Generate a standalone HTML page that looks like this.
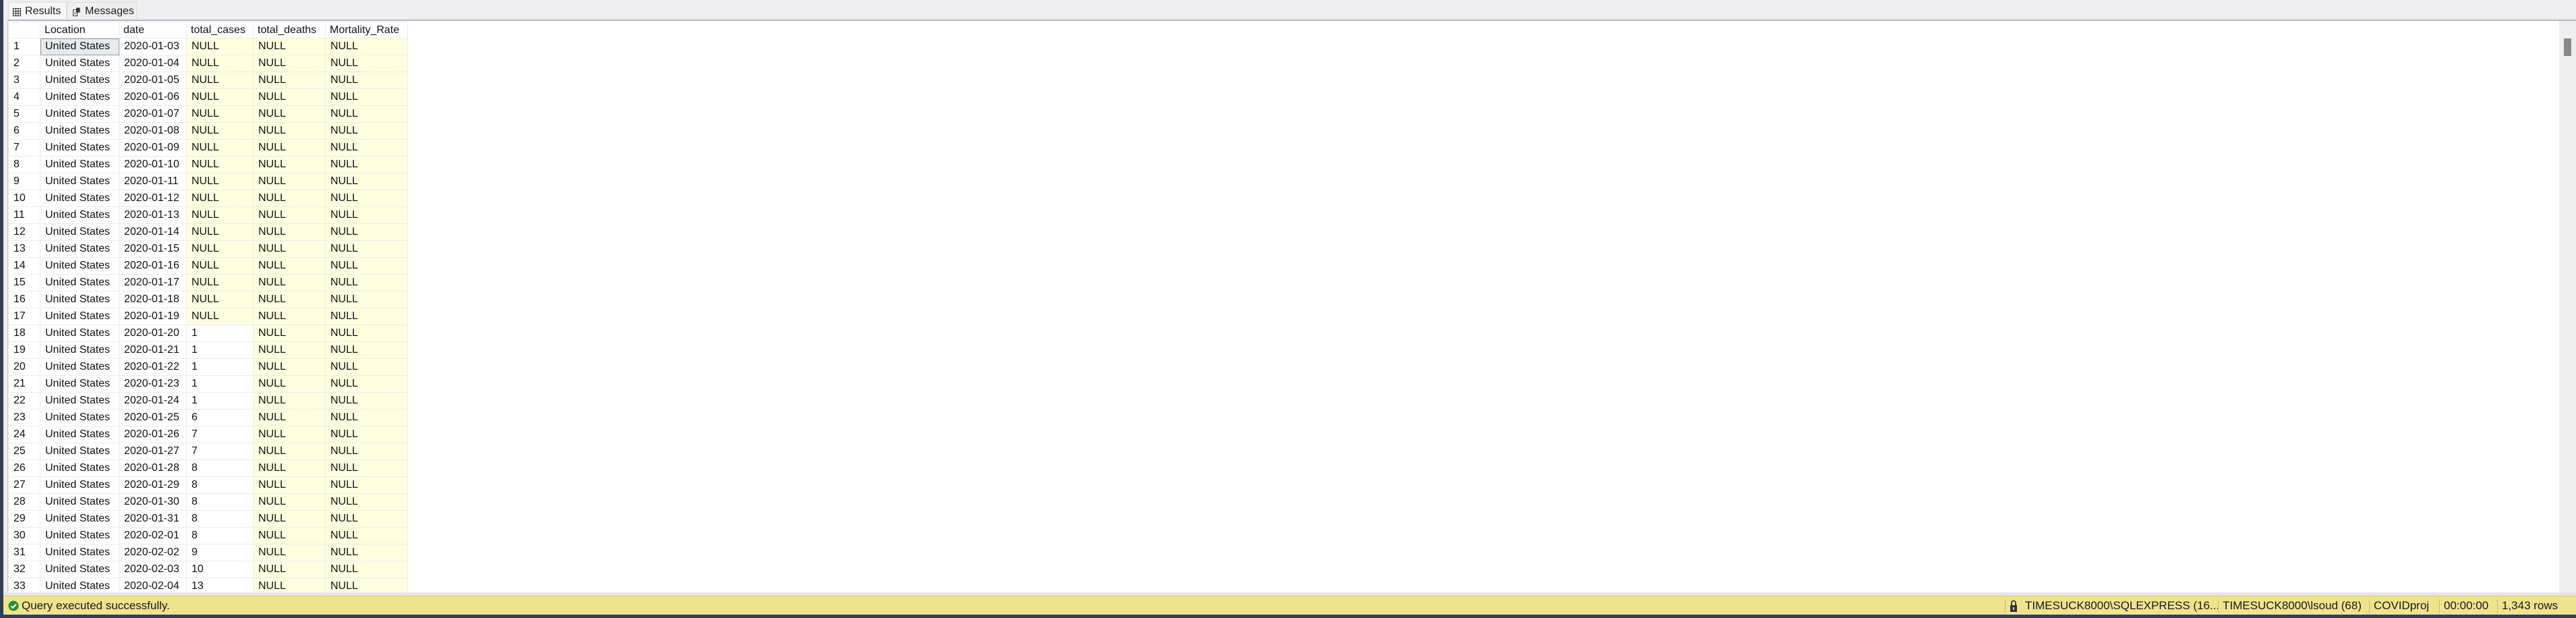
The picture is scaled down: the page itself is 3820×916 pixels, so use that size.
<!DOCTYPE html>
<html><head><meta charset="utf-8"><style>
*{margin:0;padding:0;box-sizing:border-box}
body{width:3820px;height:916px;overflow:hidden;background:#eeeef0;position:relative;font-family:"Liberation Sans",Arial,sans-serif;color:#1e1e1e}
.lb{position:absolute;left:0;top:0;width:5px;height:916px;background:#2f3d5c}
.bb{position:absolute;left:0;top:911px;width:3820px;height:5px;background:#2f3d5c}
.grid{position:absolute;left:11px;top:29px;width:3809px;height:850px;background:#fff;border-top:2px solid #b4b4c4;border-left:1px solid #c8c8d0;overflow:hidden}
.sb{position:absolute;right:0;top:0;width:25px;height:850px;background:#efefef}
.thumb{position:absolute;left:7px;top:26px;width:11px;height:26px;background:#888}
table{position:absolute;left:0;top:1px;border-collapse:collapse;table-layout:fixed;font-size:16px}
td,th{height:25px;padding:0 0 0 7px;text-align:left;font-weight:normal;white-space:nowrap;border:1px solid #ececec;overflow:hidden;color:#111}
th{height:24px;padding-left:6px}
tr td:first-child{padding-left:7px}
.y{background:#ffffe0}
.sel{background:#e6ebf0;outline:1px dotted #444;outline-offset:-1px}
.tab{position:absolute;top:3px;height:27px;font-size:16px;border:1px solid #dcdcdc;border-bottom:none;white-space:nowrap}
.st{position:absolute;left:5px;top:883px;width:3815px;height:28px;background:#efe48c;border-top:1px solid #d0c880}
.gap{position:absolute;left:5px;top:878px;width:3815px;height:5px;background:#e4e4ea}
.t{position:absolute;top:4px;font-size:17px;white-space:nowrap;color:#1a1a1a}
.sep{position:absolute;top:4px;width:1px;height:21px;background:#c8bd70}
</style></head><body>
<div class="tab" style="left:12px;width:87px;background:#f7f7f7">
<svg style="position:absolute;left:6px;top:8px" width="12" height="12"><rect x=".5" y=".5" width="11" height="11" fill="none" stroke="#333"/><path d="M0 4.5h12M0 8h12M4.5 0v12M8 0v12" stroke="#333" stroke-width="1"/></svg>
<span style="position:absolute;left:24px;top:4px">Results</span></div>
<div class="tab" style="left:99px;width:104px;height:25px;background:#efefef">
<svg style="position:absolute;left:7px;top:7px" width="12" height="13"><rect x="1.5" y="3.5" width="6" height="9" fill="#fff" stroke="#333"/><rect x="6" y=".5" width="5.5" height="7" fill="#333"/><path d="M3 7h3M3 9.5h3" stroke="#333"/></svg>
<span style="position:absolute;left:26px;top:4px">Messages</span></div>
<div class="grid">
<table>
<colgroup><col style="width:47px"><col style="width:117px"><col style="width:100px"><col style="width:99px"><col style="width:107px"><col style="width:122px"></colgroup>
<tr><th></th><th>Location</th><th>date</th><th>total_cases</th><th>total_deaths</th><th>Mortality_Rate</th></tr>
<tr><td>1</td><td class="sel">United States</td><td>2020-01-03</td><td class="y">NULL</td><td class="y">NULL</td><td class="y">NULL</td></tr>
<tr><td>2</td><td>United States</td><td>2020-01-04</td><td class="y">NULL</td><td class="y">NULL</td><td class="y">NULL</td></tr>
<tr><td>3</td><td>United States</td><td>2020-01-05</td><td class="y">NULL</td><td class="y">NULL</td><td class="y">NULL</td></tr>
<tr><td>4</td><td>United States</td><td>2020-01-06</td><td class="y">NULL</td><td class="y">NULL</td><td class="y">NULL</td></tr>
<tr><td>5</td><td>United States</td><td>2020-01-07</td><td class="y">NULL</td><td class="y">NULL</td><td class="y">NULL</td></tr>
<tr><td>6</td><td>United States</td><td>2020-01-08</td><td class="y">NULL</td><td class="y">NULL</td><td class="y">NULL</td></tr>
<tr><td>7</td><td>United States</td><td>2020-01-09</td><td class="y">NULL</td><td class="y">NULL</td><td class="y">NULL</td></tr>
<tr><td>8</td><td>United States</td><td>2020-01-10</td><td class="y">NULL</td><td class="y">NULL</td><td class="y">NULL</td></tr>
<tr><td>9</td><td>United States</td><td>2020-01-11</td><td class="y">NULL</td><td class="y">NULL</td><td class="y">NULL</td></tr>
<tr><td>10</td><td>United States</td><td>2020-01-12</td><td class="y">NULL</td><td class="y">NULL</td><td class="y">NULL</td></tr>
<tr><td>11</td><td>United States</td><td>2020-01-13</td><td class="y">NULL</td><td class="y">NULL</td><td class="y">NULL</td></tr>
<tr><td>12</td><td>United States</td><td>2020-01-14</td><td class="y">NULL</td><td class="y">NULL</td><td class="y">NULL</td></tr>
<tr><td>13</td><td>United States</td><td>2020-01-15</td><td class="y">NULL</td><td class="y">NULL</td><td class="y">NULL</td></tr>
<tr><td>14</td><td>United States</td><td>2020-01-16</td><td class="y">NULL</td><td class="y">NULL</td><td class="y">NULL</td></tr>
<tr><td>15</td><td>United States</td><td>2020-01-17</td><td class="y">NULL</td><td class="y">NULL</td><td class="y">NULL</td></tr>
<tr><td>16</td><td>United States</td><td>2020-01-18</td><td class="y">NULL</td><td class="y">NULL</td><td class="y">NULL</td></tr>
<tr><td>17</td><td>United States</td><td>2020-01-19</td><td class="y">NULL</td><td class="y">NULL</td><td class="y">NULL</td></tr>
<tr><td>18</td><td>United States</td><td>2020-01-20</td><td>1</td><td class="y">NULL</td><td class="y">NULL</td></tr>
<tr><td>19</td><td>United States</td><td>2020-01-21</td><td>1</td><td class="y">NULL</td><td class="y">NULL</td></tr>
<tr><td>20</td><td>United States</td><td>2020-01-22</td><td>1</td><td class="y">NULL</td><td class="y">NULL</td></tr>
<tr><td>21</td><td>United States</td><td>2020-01-23</td><td>1</td><td class="y">NULL</td><td class="y">NULL</td></tr>
<tr><td>22</td><td>United States</td><td>2020-01-24</td><td>1</td><td class="y">NULL</td><td class="y">NULL</td></tr>
<tr><td>23</td><td>United States</td><td>2020-01-25</td><td>6</td><td class="y">NULL</td><td class="y">NULL</td></tr>
<tr><td>24</td><td>United States</td><td>2020-01-26</td><td>7</td><td class="y">NULL</td><td class="y">NULL</td></tr>
<tr><td>25</td><td>United States</td><td>2020-01-27</td><td>7</td><td class="y">NULL</td><td class="y">NULL</td></tr>
<tr><td>26</td><td>United States</td><td>2020-01-28</td><td>8</td><td class="y">NULL</td><td class="y">NULL</td></tr>
<tr><td>27</td><td>United States</td><td>2020-01-29</td><td>8</td><td class="y">NULL</td><td class="y">NULL</td></tr>
<tr><td>28</td><td>United States</td><td>2020-01-30</td><td>8</td><td class="y">NULL</td><td class="y">NULL</td></tr>
<tr><td>29</td><td>United States</td><td>2020-01-31</td><td>8</td><td class="y">NULL</td><td class="y">NULL</td></tr>
<tr><td>30</td><td>United States</td><td>2020-02-01</td><td>8</td><td class="y">NULL</td><td class="y">NULL</td></tr>
<tr><td>31</td><td>United States</td><td>2020-02-02</td><td>9</td><td class="y">NULL</td><td class="y">NULL</td></tr>
<tr><td>32</td><td>United States</td><td>2020-02-03</td><td>10</td><td class="y">NULL</td><td class="y">NULL</td></tr>
<tr><td>33</td><td>United States</td><td>2020-02-04</td><td>13</td><td class="y">NULL</td><td class="y">NULL</td></tr>
</table>
<div class="sb"><div class="thumb"></div></div>
</div>
<div class="gap"></div>
<div class="st">
<svg style="position:absolute;left:7px;top:6px" width="16" height="16"><circle cx="8" cy="8" r="7.5" fill="#2e8b3a"/><path d="M4.3 8.3l2.7 2.7 4.8-5.4" stroke="#fff" stroke-width="2" fill="none"/></svg>
<span class="t" style="left:27px">Query executed successfully.</span>
<div class="sep" style="left:2968px"></div>
<svg style="position:absolute;left:2976px;top:5px" width="10" height="18"><path d="M2 8V4.5a3 3 0 0 1 6 0V8" stroke="#333" stroke-width="1.8" fill="none"/><rect x="0" y="8" width="10" height="10" fill="#333"/><rect x="4" y="11" width="2" height="4" fill="#ddd"/></svg>
<span class="t" style="left:2998px">TIMESUCK8000\SQLEXPRESS (16...</span>
<div class="sep" style="left:3284px"></div>
<span class="t" style="left:3291px">TIMESUCK8000\lsoud (68)</span>
<div class="sep" style="left:3508px"></div>
<span class="t" style="left:3515px">COVIDproj</span>
<div class="sep" style="left:3612px"></div>
<span class="t" style="left:3619px">00:00:00</span>
<div class="sep" style="left:3698px"></div>
<span class="t" style="left:3705px">1,343 rows</span>
</div>
<div class="lb"></div>
<div class="bb"></div>
</body></html>
